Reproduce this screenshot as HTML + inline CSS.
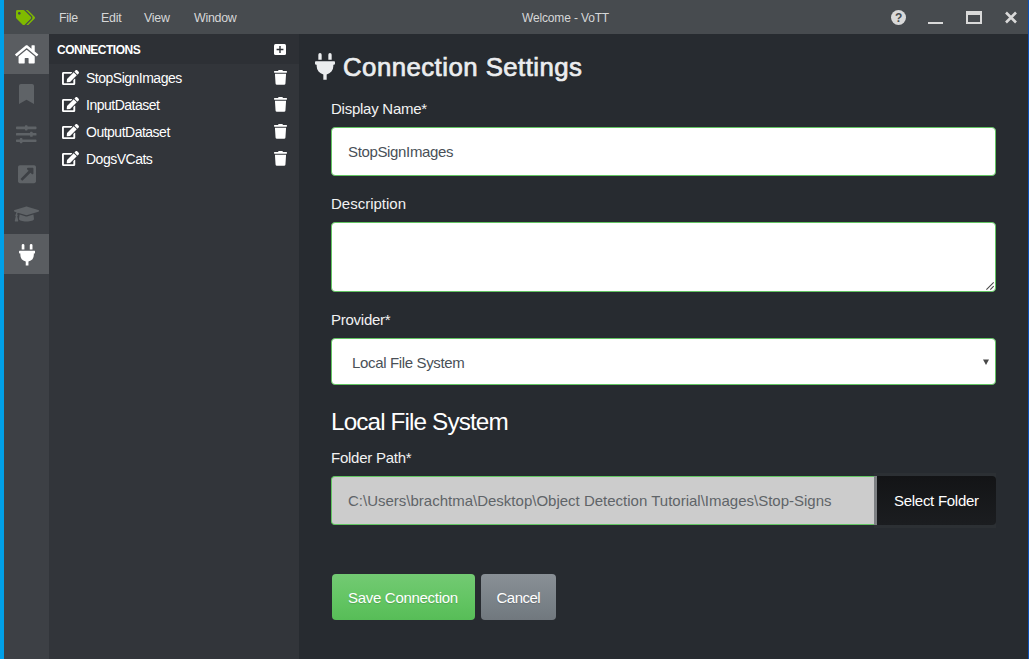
<!DOCTYPE html>
<html><head><meta charset="utf-8">
<style>
*{box-sizing:border-box;margin:0;padding:0}
html,body{width:1029px;height:659px;overflow:hidden;background:#272b30;font-family:"Liberation Sans",sans-serif;color:#fff}
.abs{position:absolute}
.t{white-space:nowrap;line-height:1}
.inp{left:331px;width:665px;background:#fff;border:1px solid #62c462;border-radius:4px}
</style></head><body>
<div class="abs" style="left:4px;top:0;width:1024px;height:34px;background:#474b4f"></div>
<div class="abs" style="left:0;top:0;width:4px;height:659px;background:#00a0e8"></div>
<div class="abs" style="left:1028px;top:0;width:1px;height:659px;background:#0d50b5"></div>
<svg class="abs" style="left:16px;top:9.8px" width="19.000" height="15.200" viewBox="0 0 640 512"><path fill="#7fba00" d="M497.941 225.941L286.059 14.059A48 48 0 0 0 252.118 0H48C21.49 0 0 21.49 0 48v204.118a48 48 0 0 0 14.059 33.941l211.882 211.882c18.744 18.745 49.136 18.746 67.882 0l204.118-204.118c18.745-18.745 18.745-49.137 0-67.882zM112 160c-26.51 0-48-21.49-48-48s21.49-48 48-48 48 21.49 48 48-21.49 48-48 48zm513.941 133.823L421.823 497.941c-18.745 18.745-49.137 18.745-67.882 0l-.36-.36L527.64 323.522c16.999-16.999 26.36-39.6 26.36-63.64s-9.362-46.641-26.36-63.64L331.397 0h48.721a48 48 0 0 1 33.941 14.059l211.882 211.882c18.745 18.745 18.745 49.137 0 67.882z"/></svg>
<div class="abs t" style="left:59px;top:12px;font-size:12.4px;color:#d6d7d8;letter-spacing:-0.25px;font-weight:400">File</div>
<div class="abs t" style="left:101px;top:12px;font-size:12.4px;color:#d6d7d8;letter-spacing:-0.25px;font-weight:400">Edit</div>
<div class="abs t" style="left:144px;top:12px;font-size:12.4px;color:#d6d7d8;letter-spacing:-0.25px;font-weight:400">View</div>
<div class="abs t" style="left:194px;top:12px;font-size:12.4px;color:#d6d7d8;letter-spacing:-0.25px;font-weight:400">Window</div>
<div class="abs t" style="left:522px;top:12px;font-size:12px;color:#d6d7d8;letter-spacing:-0.15px;font-weight:400">Welcome - VoTT</div>
<svg class="abs" style="left:880px;top:0" width="148" height="34" viewBox="880 0 148 34">
  <circle cx="898.5" cy="17.5" r="7.5" fill="#d9d9d9"/>
  <text x="898.6" y="22" font-family="Liberation Sans" font-weight="bold" font-size="12" text-anchor="middle" fill="#474b4f">?</text>
  <rect x="928" y="22" width="15" height="2" fill="#d9d9d9"/>
  <rect x="966" y="11" width="16" height="13" fill="#d9d9d9"/>
  <rect x="968" y="15" width="12" height="7" fill="#474b4f"/>
  <path d="M1006 12.5 L1016 22.5 M1016 12.5 L1006 22.5" stroke="#d9d9d9" stroke-width="2.6"/>
</svg>
<div class="abs" style="left:4px;top:34px;width:45px;height:625px;background:#3d4045"></div>
<div class="abs" style="left:4px;top:34px;width:45px;height:40px;background:#5a5d61"></div>
<div class="abs" style="left:4px;top:234px;width:45px;height:40px;background:#5a5d61"></div>
<div class="abs" style="left:49px;top:34px;width:250px;height:625px;background:#32353a"></div>
<div class="abs" style="left:49px;top:34px;width:250px;height:30px;background:#2d3035"></div>
<svg class="abs" style="left:15.3px;top:44.3px" width="23.300" height="20.711" viewBox="0 0 576 512"><path fill="#fff" d="M488 312.7V456c0 13.3-10.7 24-24 24H348c-6.6 0-12-5.4-12-12V356c0-6.6-5.4-12-12-12h-72c-6.6 0-12 5.4-12 12v112c0 6.6-5.4 12-12 12H112c-13.3 0-24-10.7-24-24V312.7c0-3.6 1.6-7 4.4-9.3l188-154.8c4.4-3.6 10.8-3.6 15.3 0l188 154.8c2.7 2.3 4.3 5.7 4.3 9.3zm83.6-60.9L488 182.9V44.4c0-6.6-5.4-12-12-12h-56c-6.6 0-12 5.4-12 12V117l-89.5-73.7c-17.7-14.6-43.3-14.6-61 0L4.3 251.8c-5.1 4.2-5.8 11.8-1.6 16.9l25.5 31c4.2 5.1 11.8 5.8 16.9 1.6l235.2-193.7c4.4-3.6 10.8-3.6 15.3 0l235.2 193.7c5.1 4.2 12.7 3.5 16.9-1.6l25.5-31c4.2-5.2 3.4-12.7-1.7-16.9z"/></svg>
<svg class="abs" style="left:19px;top:84px" width="15.000" height="20.000" viewBox="0 0 384 512"><path fill="#5f6367" d="M0 512V48C0 21.49 21.49 0 48 0h288c26.51 0 48 21.49 48 48v464L192 400 0 512z"/></svg>
<svg class="abs" style="left:16.2px;top:124.4px" width="20.500" height="20.500" viewBox="0 0 512 512"><path fill="#5f6367" d="M496 384H160v-16c0-8.8-7.2-16-16-16h-32c-8.8 0-16 7.2-16 16v16H16c-8.8 0-16 7.2-16 16v32c0 8.8 7.2 16 16 16h80v16c0 8.8 7.2 16 16 16h32c8.8 0 16-7.2 16-16v-16h336c8.8 0 16-7.2 16-16v-32c0-8.8-7.2-16-16-16zm0-160h-80v-16c0-8.8-7.2-16-16-16h-32c-8.8 0-16 7.2-16 16v16H16c-8.8 0-16 7.2-16 16v32c0 8.8 7.2 16 16 16h336v16c0 8.8 7.2 16 16 16h32c8.8 0 16-7.2 16-16v-16h80c8.8 0 16-7.2 16-16v-32c0-8.8-7.2-16-16-16zm0-160H288V48c0-8.8-7.2-16-16-16h-32c-8.8 0-16 7.2-16 16v16H16C7.2 64 0 71.2 0 80v32c0 8.8 7.2 16 16 16h208v16c0 8.8 7.2 16 16 16h32c8.8 0 16-7.2 16-16v-16h208c8.8 0 16-7.2 16-16V80c0-8.8-7.2-16-16-16z"/></svg>
<svg class="abs" style="left:18px;top:164.2px" width="18.000" height="20.571" viewBox="0 0 448 512"><path fill="#5f6367" d="M448 80v352c0 26.51-21.49 48-48 48H48c-26.51 0-48-21.49-48-48V80c0-26.51 21.49-48 48-48h352c26.51 0 48 21.49 48 48zm-88 16H248.029c-21.313 0-32.08 25.861-16.971 40.971l31.984 31.987L67.515 364.485c-4.686 4.686-4.686 12.284 0 16.971l31.029 31.029c4.687 4.686 12.285 4.686 16.971 0l195.526-195.526 31.988 31.991C358.058 263.977 384 253.425 384 231.979V120c0-13.255-10.745-24-24-24z"/></svg>
<svg class="abs" style="left:14px;top:204px" width="25.000" height="20.000" viewBox="0 0 640 512"><path fill="#5f6367" d="M622.34 153.2L343.4 67.5c-15.2-4.67-31.6-4.67-46.79 0L17.66 153.2c-23.54 7.23-23.54 38.36 0 45.59l48.63 14.94c-10.67 13.19-17.23 29.28-17.88 46.9C38.78 266.15 32 276.11 32 288c0 10.78 5.68 19.85 13.86 25.65L20.33 428.53C18.11 438.52 25.71 448 35.94 448h56.11c10.24 0 17.84-9.48 15.62-19.47L82.14 313.65C90.32 307.85 96 298.78 96 288c0-11.57-6.47-21.25-15.66-26.87.76-15.02 8.44-28.3 20.69-36.72L296.6 284.5c9.06 2.78 26.44 6.25 46.79 0l278.95-85.7c23.55-7.24 23.55-38.36 0-45.6zM352.79 315.09c-28.53 8.76-52.84 3.92-65.59 0l-145.02-44.55L128 384c0 35.35 85.96 64 192 64s192-28.65 192-64l-14.18-113.47-145.03 44.56z"/></svg>
<svg class="abs" style="left:18.7px;top:244.3px" width="16.200" height="21.600" viewBox="0 0 384 512"><path fill="#fff" d="M320,32a32,32,0,0,0-64,0v96h64Zm48,128H16A16,16,0,0,0,0,176v32a16,16,0,0,0,16,16H32v32A160.07,160.07,0,0,0,160,412.8V512h64V412.8A160.07,160.07,0,0,0,352,256V224h16a16,16,0,0,0,16-16V176A16,16,0,0,0,368,160ZM128,32a32,32,0,0,0-64,0v96h64Z"/></svg>
<div class="abs t" style="left:57px;top:43.7px;font-size:12px;color:#fff;letter-spacing:-0.5px;font-weight:700">CONNECTIONS</div>
<svg class="abs" style="left:274px;top:44px" width="12" height="11" viewBox="0 0 12 11"><rect x="0" y="0" width="12" height="11" rx="1.5" fill="#fff"/><path d="M2.6 5.5 H9.4 M6 2 V9" stroke="#2b2e33" stroke-width="1.4"/></svg>
<svg class="abs" style="left:62px;top:70px" width="17.000" height="15.111" viewBox="0 0 576 512"><path fill="#fff" d="M402.6 83.2l90.2 90.2c3.8 3.8 3.8 10 0 13.8L274.4 405.6l-92.8 10.3c-12.4 1.4-22.9-9.1-21.5-21.5l10.3-92.8L388.8 83.2c3.8-3.8 10-3.8 13.8 0zm162-22.9l-48.8-48.8c-15.2-15.2-39.9-15.2-55.2 0l-35.4 35.4c-3.8 3.8-3.8 10 0 13.8l90.2 90.2c3.8 3.8 10 3.8 13.8 0l35.4-35.4c15.2-15.3 15.2-40 0-55.2zM384 346.2V448H64V128h229.8c3.2 0 6.2-1.3 8.5-3.5l40-40c7.6-7.6 2.2-20.5-8.5-20.5H48C21.5 64 0 85.5 0 112v352c0 26.5 21.5 48 48 48h352c26.5 0 48-21.5 48-48V306.2c0-10.7-12.9-16-20.5-8.5l-40 40c-2.2 2.3-3.5 5.3-3.5 8.5z"/></svg>
<div class="abs t" style="left:86px;top:71px;font-size:14px;color:#fff;letter-spacing:-0.5px;font-weight:400">StopSignImages</div>
<svg class="abs" style="left:274px;top:70px" width="13.000" height="14.857" viewBox="0 0 448 512"><path fill="#fff" d="M432 32H312l-9.4-18.7A24 24 0 0 0 281.1 0H166.8a23.72 23.72 0 0 0-21.4 13.3L136 32H16A16 16 0 0 0 0 48v32a16 16 0 0 0 16 16h416a16 16 0 0 0 16-16V48a16 16 0 0 0-16-16zM53.2 467a48 48 0 0 0 47.9 45h245.8a48 48 0 0 0 47.9-45L416 128H32z"/></svg>
<svg class="abs" style="left:62px;top:97px" width="17.000" height="15.111" viewBox="0 0 576 512"><path fill="#fff" d="M402.6 83.2l90.2 90.2c3.8 3.8 3.8 10 0 13.8L274.4 405.6l-92.8 10.3c-12.4 1.4-22.9-9.1-21.5-21.5l10.3-92.8L388.8 83.2c3.8-3.8 10-3.8 13.8 0zm162-22.9l-48.8-48.8c-15.2-15.2-39.9-15.2-55.2 0l-35.4 35.4c-3.8 3.8-3.8 10 0 13.8l90.2 90.2c3.8 3.8 10 3.8 13.8 0l35.4-35.4c15.2-15.3 15.2-40 0-55.2zM384 346.2V448H64V128h229.8c3.2 0 6.2-1.3 8.5-3.5l40-40c7.6-7.6 2.2-20.5-8.5-20.5H48C21.5 64 0 85.5 0 112v352c0 26.5 21.5 48 48 48h352c26.5 0 48-21.5 48-48V306.2c0-10.7-12.9-16-20.5-8.5l-40 40c-2.2 2.3-3.5 5.3-3.5 8.5z"/></svg>
<div class="abs t" style="left:86px;top:98px;font-size:14px;color:#fff;letter-spacing:-0.5px;font-weight:400">InputDataset</div>
<svg class="abs" style="left:274px;top:97px" width="13.000" height="14.857" viewBox="0 0 448 512"><path fill="#fff" d="M432 32H312l-9.4-18.7A24 24 0 0 0 281.1 0H166.8a23.72 23.72 0 0 0-21.4 13.3L136 32H16A16 16 0 0 0 0 48v32a16 16 0 0 0 16 16h416a16 16 0 0 0 16-16V48a16 16 0 0 0-16-16zM53.2 467a48 48 0 0 0 47.9 45h245.8a48 48 0 0 0 47.9-45L416 128H32z"/></svg>
<svg class="abs" style="left:62px;top:124px" width="17.000" height="15.111" viewBox="0 0 576 512"><path fill="#fff" d="M402.6 83.2l90.2 90.2c3.8 3.8 3.8 10 0 13.8L274.4 405.6l-92.8 10.3c-12.4 1.4-22.9-9.1-21.5-21.5l10.3-92.8L388.8 83.2c3.8-3.8 10-3.8 13.8 0zm162-22.9l-48.8-48.8c-15.2-15.2-39.9-15.2-55.2 0l-35.4 35.4c-3.8 3.8-3.8 10 0 13.8l90.2 90.2c3.8 3.8 10 3.8 13.8 0l35.4-35.4c15.2-15.3 15.2-40 0-55.2zM384 346.2V448H64V128h229.8c3.2 0 6.2-1.3 8.5-3.5l40-40c7.6-7.6 2.2-20.5-8.5-20.5H48C21.5 64 0 85.5 0 112v352c0 26.5 21.5 48 48 48h352c26.5 0 48-21.5 48-48V306.2c0-10.7-12.9-16-20.5-8.5l-40 40c-2.2 2.3-3.5 5.3-3.5 8.5z"/></svg>
<div class="abs t" style="left:86px;top:125px;font-size:14px;color:#fff;letter-spacing:-0.5px;font-weight:400">OutputDataset</div>
<svg class="abs" style="left:274px;top:124px" width="13.000" height="14.857" viewBox="0 0 448 512"><path fill="#fff" d="M432 32H312l-9.4-18.7A24 24 0 0 0 281.1 0H166.8a23.72 23.72 0 0 0-21.4 13.3L136 32H16A16 16 0 0 0 0 48v32a16 16 0 0 0 16 16h416a16 16 0 0 0 16-16V48a16 16 0 0 0-16-16zM53.2 467a48 48 0 0 0 47.9 45h245.8a48 48 0 0 0 47.9-45L416 128H32z"/></svg>
<svg class="abs" style="left:62px;top:151px" width="17.000" height="15.111" viewBox="0 0 576 512"><path fill="#fff" d="M402.6 83.2l90.2 90.2c3.8 3.8 3.8 10 0 13.8L274.4 405.6l-92.8 10.3c-12.4 1.4-22.9-9.1-21.5-21.5l10.3-92.8L388.8 83.2c3.8-3.8 10-3.8 13.8 0zm162-22.9l-48.8-48.8c-15.2-15.2-39.9-15.2-55.2 0l-35.4 35.4c-3.8 3.8-3.8 10 0 13.8l90.2 90.2c3.8 3.8 10 3.8 13.8 0l35.4-35.4c15.2-15.3 15.2-40 0-55.2zM384 346.2V448H64V128h229.8c3.2 0 6.2-1.3 8.5-3.5l40-40c7.6-7.6 2.2-20.5-8.5-20.5H48C21.5 64 0 85.5 0 112v352c0 26.5 21.5 48 48 48h352c26.5 0 48-21.5 48-48V306.2c0-10.7-12.9-16-20.5-8.5l-40 40c-2.2 2.3-3.5 5.3-3.5 8.5z"/></svg>
<div class="abs t" style="left:86px;top:152px;font-size:14px;color:#fff;letter-spacing:-0.5px;font-weight:400">DogsVCats</div>
<svg class="abs" style="left:274px;top:151px" width="13.000" height="14.857" viewBox="0 0 448 512"><path fill="#fff" d="M432 32H312l-9.4-18.7A24 24 0 0 0 281.1 0H166.8a23.72 23.72 0 0 0-21.4 13.3L136 32H16A16 16 0 0 0 0 48v32a16 16 0 0 0 16 16h416a16 16 0 0 0 16-16V48a16 16 0 0 0-16-16zM53.2 467a48 48 0 0 0 47.9 45h245.8a48 48 0 0 0 47.9-45L416 128H32z"/></svg>
<svg class="abs" style="left:315px;top:53px" width="20.000" height="26.667" viewBox="0 0 384 512"><path fill="#ebedef" d="M320,32a32,32,0,0,0-64,0v96h64Zm48,128H16A16,16,0,0,0,0,176v32a16,16,0,0,0,16,16H32v32A160.07,160.07,0,0,0,160,412.8V512h64V412.8A160.07,160.07,0,0,0,352,256V224h16a16,16,0,0,0,16-16V176A16,16,0,0,0,368,160ZM128,32a32,32,0,0,0-64,0v96h64Z"/></svg>
<div class="abs t" style="left:343px;top:54.5px;font-size:25.8px;color:#ebedef;letter-spacing:0.45px;font-weight:400;-webkit-text-stroke:0.7px #ebedef">Connection Settings</div>
<div class="abs t" style="left:331px;top:100.5px;font-size:15px;color:#f2f2f2;letter-spacing:-0.25px;font-weight:400">Display Name*</div>
<div class="abs inp" style="top:127px;height:49px"></div>
<div class="abs t" style="left:348px;top:143.5px;font-size:15px;color:#495057;letter-spacing:-0.35px;font-weight:400">StopSignImages</div>
<div class="abs t" style="left:331px;top:100.5px;font-size:15px;color:#f2f2f2;letter-spacing:0px;font-weight:400;margin-top:95px">Description</div>
<div class="abs inp" style="top:222px;height:70px"></div>
<svg class="abs" style="left:985px;top:281px" width="10" height="10" viewBox="0 0 10 10"><path d="M1.4 8.6 L8.7 1.3 M5.3 8.6 L8.7 5.2" stroke="#4a4a4a" stroke-width="1.1"/></svg>
<div class="abs t" style="left:331px;top:100.5px;font-size:15px;color:#f2f2f2;letter-spacing:-0.25px;font-weight:400;margin-top:211px">Provider*</div>
<div class="abs inp" style="top:338px;height:47px"></div>
<div class="abs t" style="left:352px;top:143.5px;font-size:15px;color:#495057;letter-spacing:-0.35px;font-weight:400;margin-top:211px">Local File System</div>
<svg class="abs" style="left:982px;top:358px" width="8" height="8" viewBox="0 0 8 8"><path d="M1 1.5 L7 1.5 L4 7 Z" fill="#484848"/></svg>
<div class="abs t" style="left:331px;top:409.5px;font-size:24.3px;color:#fff;letter-spacing:-0.88px;font-weight:400">Local File System</div>
<div class="abs t" style="left:331px;top:100.5px;font-size:15px;color:#f2f2f2;letter-spacing:-0.25px;font-weight:400;margin-top:349px">Folder Path*</div>
<div class="abs" style="left:331px;top:476px;width:543px;height:49px;background:#ccc;border:1px solid #62c462;border-right:0;border-radius:4px 0 0 4px"></div>
<div class="abs t" style="left:348px;top:492.5px;font-size:15px;color:#5f6468;letter-spacing:0px;font-weight:400">C:\Users\brachtma\Desktop\Object Detection Tutorial\Images\Stop-Signs</div>
<div class="abs" style="left:874px;top:473px;width:122px;height:55px;background:#2c3034"></div>
<div class="abs" style="left:874px;top:476px;width:3px;height:49px;background:#7d8083"></div>
<div class="abs" style="left:877px;top:476px;width:118.5px;height:49px;background:linear-gradient(#131416,#1b1d20);border-radius:0 4px 4px 0"></div>
<div class="abs t" style="left:894px;top:492.5px;font-size:15px;color:#fff;letter-spacing:-0.28px;font-weight:400">Select Folder</div>
<div class="abs" style="left:332px;top:574px;width:143px;height:46px;background:linear-gradient(#73ca73,#62c462 60%,#57bd57);border-radius:4px"></div>
<div class="abs" style="left:481px;top:574px;width:75px;height:46px;background:linear-gradient(#899096,#7a8288 60%,#71787e);border-radius:4px"></div>
<div class="abs t" style="left:348px;top:589.5px;font-size:15px;color:#fff;letter-spacing:-0.3px;font-weight:400;text-shadow:0 1px 1px rgba(0,0,0,.15)">Save Connection</div>
<div class="abs t" style="left:496.5px;top:589.5px;font-size:15px;color:#fff;letter-spacing:-0.5px;font-weight:400;text-shadow:0 1px 1px rgba(0,0,0,.15)">Cancel</div>
</body></html>
